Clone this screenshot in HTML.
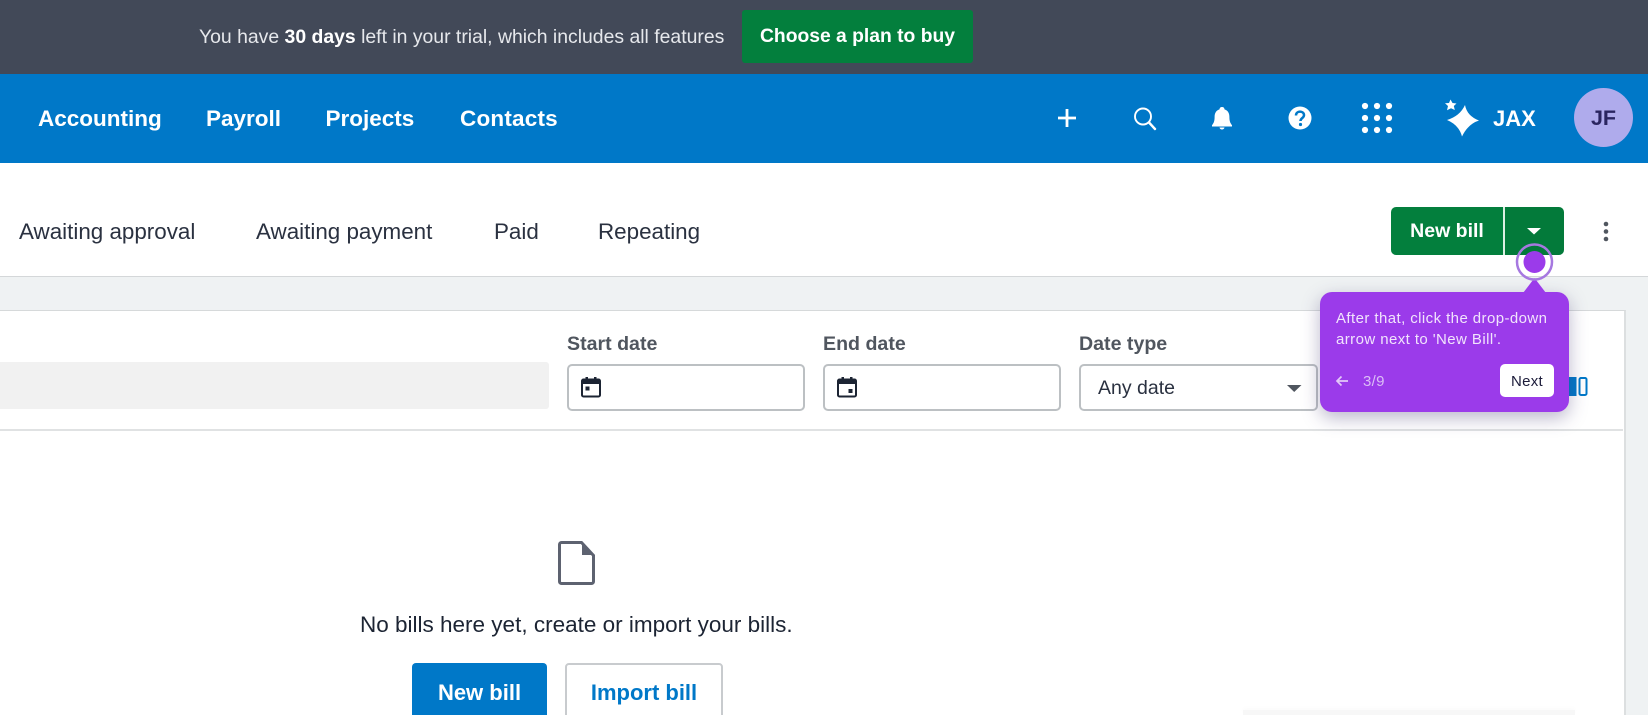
<!DOCTYPE html>
<html lang="en">
<head>
<meta charset="utf-8">
<title>Bills</title>
<style>
html,body{margin:0;padding:0;width:1648px;height:715px;overflow:hidden;background:#fff}
body{position:relative;font-family:"Liberation Sans",sans-serif;color:#1f2733}
.a{position:absolute;white-space:nowrap}
.nav{top:104px;font-size:22.5px;font-weight:700;color:#fff;line-height:30px}
.sub{top:217px;font-size:22.4px;color:#2a3140;line-height:30px}
.lbl{top:331px;font-size:19.6px;font-weight:700;color:#50565f;line-height:26px}
.inp{top:364px;height:47px;box-sizing:border-box;border:2px solid #bcc0c3;border-radius:5px;background:#fff}
</style>
</head>
<body>
<!-- trial bar -->
<div class="a" style="left:0;top:0;width:1648px;height:74px;background:#424958"></div>
<div class="a" style="left:199px;top:24px;font-size:19.4px;line-height:26px;color:#e6e8ec">You have <b style="color:#fff">30 days</b> left in your trial, which includes all features</div>
<div class="a" style="left:742px;top:10px;width:231px;height:53px;background:#037f3d;border-radius:3px"></div>
<div class="a" style="left:760px;top:24px;font-size:19.3px;line-height:26px;font-weight:700;color:#fff">Choose a plan to buy</div>

<!-- blue nav -->
<div class="a" style="left:0;top:74px;width:1648px;height:89px;background:#0078c8"></div>
<div class="a nav" style="left:38px">Accounting</div>
<div class="a nav" style="left:206px">Payroll</div>
<div class="a nav" style="left:325.500px">Projects</div>
<div class="a nav" style="left:460px;letter-spacing:.2px">Contacts</div>

<svg class="a" style="left:0;top:0" width="1648" height="170" viewBox="0 0 1648 170">
  <path d="M1067 109v18M1058 118h18" stroke="#fff" stroke-width="2.800" fill="none"/>
  <circle cx="1143" cy="116.500" r="8" stroke="#fff" stroke-width="1.900" fill="none"/>
  <path d="M1149 122.500l6 6.500" stroke="#fff" stroke-width="2.400" fill="none" stroke-linecap="round"/>
  <path d="M1222 107c1.600 0 2.400 1 2.500 2.400 3.500 1 4.900 4 4.900 7.600 0 4 .8 6 2.600 8.200v1.300h-20v-1.300c1.800-2.200 2.600-4.200 2.600-8.200 0-3.600 1.400-6.600 4.900-7.600.1-1.400.9-2.400 2.500-2.400zM1219.500 127.500h5c-.3 1.300-1.200 2-2.500 2s-2.200-.7-2.500-2z" fill="#fff"/>
  <circle cx="1300" cy="118" r="11.500" fill="#fff"/>
  <path d="M1296 115.500c0-2.500 1.800-3.900 4-3.900s4 1.400 4 3.500c0 3-3.500 3-3.500 5.900" stroke="#0078c8" stroke-width="2.500" fill="none"/>
  <circle cx="1300.500" cy="124.500" r="1.600" fill="#0078c8"/>
  <g fill="#fff">
    <circle cx="1365" cy="106" r="3.100"/><circle cx="1377" cy="106" r="3.100"/><circle cx="1389" cy="106" r="3.100"/>
    <circle cx="1365" cy="118" r="3.100"/><circle cx="1377" cy="118" r="3.100"/><circle cx="1389" cy="118" r="3.100"/>
    <circle cx="1365" cy="130" r="3.100"/><circle cx="1377" cy="130" r="3.100"/><circle cx="1389" cy="130" r="3.100"/>
    <path d="M1465 105Q1467 116 1479 120.500Q1468 124 1462 136.500Q1459 125 1447 120Q1460 116 1465 105z"/>
    <path d="M1450.500 99.500L1452.500 103 1456.500 103.500 1453.800 106 1454.800 110 1451 108.200 1447 110.200 1448 106 1445 103.300 1449 103z"/>
  </g>
</svg>
<div class="a" style="left:1493px;top:104px;font-size:22px;font-weight:700;line-height:30px;color:#fff">JAX</div>
<div class="a" style="left:1574px;top:88px;width:59px;height:59px;border-radius:50%;background:#afabec;text-align:center;line-height:61px;font-size:21.5px;font-weight:700;color:#2a2560">JF</div>

<!-- sub nav -->
<div class="a sub" style="left:19px">Awaiting approval</div>
<div class="a sub" style="left:256px">Awaiting payment</div>
<div class="a sub" style="left:494px">Paid</div>
<div class="a sub" style="left:598px">Repeating</div>

<div class="a" style="left:1391px;top:207px;width:112px;height:48px;background:#037f3d;border-radius:5px 0 0 5px;text-align:center;line-height:48px;font-size:19.5px;font-weight:700;color:#fff">New bill</div>
<div class="a" style="left:1503px;top:207px;width:1.500px;height:48px;background:#dcefe3"></div>
<div class="a" style="left:1504.500px;top:207px;width:59px;height:48px;background:#037a3a;border-radius:0 5px 5px 0"></div>
<svg class="a" style="left:1527px;top:228px" width="15" height="7"><path d="M0 0h14L7 6.500z" fill="#fff"/></svg>
<svg class="a" style="left:1600px;top:220px" width="12" height="24"><g fill="#50565f"><circle cx="6" cy="4" r="2.300"/><circle cx="6" cy="11.500" r="2.300"/><circle cx="6" cy="19" r="2.300"/></g></svg>

<!-- page background + card -->
<div class="a" style="left:0;top:276px;width:1648px;height:439px;background:#eff2f3"></div>
<div class="a" style="left:0;top:275.500px;width:1648px;height:1.500px;background:#d4d7d9"></div>
<div class="a" style="left:0;top:310px;width:1626px;height:405px;box-sizing:border-box;background:#fff;border-top:1.500px solid #d6d9da;border-right:2.500px solid #dcdfe0"></div>
<div class="a" style="left:0;top:429px;width:1623px;height:1.500px;background:#e0e2e3"></div>

<!-- filters -->
<div class="a" style="left:0;top:362px;width:549px;height:47px;background:#f1f1f1;border-radius:0 3px 3px 0"></div>
<div class="a lbl" style="left:567px">Start date</div>
<div class="a lbl" style="left:823px">End date</div>
<div class="a lbl" style="left:1079px">Date type</div>
<div class="a inp" style="left:567px;width:238px"></div>
<div class="a inp" style="left:823px;width:238px"></div>
<div class="a inp" style="left:1079px;width:239px"></div>
<svg class="a" style="left:580px;top:376px" width="22" height="22" viewBox="0 0 22 22">
  <path d="M3.500 3.500h15a1.500 1.500 0 0 1 1.500 1.500v14a1.500 1.500 0 0 1-1.500 1.500h-15a1.500 1.500 0 0 1-1.500-1.500v-14a1.500 1.500 0 0 1 1.500-1.500z" fill="none" stroke="#1c2433" stroke-width="2"/>
  <path d="M2 4h18v4H2z" fill="#1c2433"/><path d="M5.500 1h2.500v3H5.500zM14 1h2.500v3H14z" fill="#1c2433"/>
  <path d="M5.500 10.500h4v4h-4z" fill="#1c2433"/>
</svg>
<svg class="a" style="left:836px;top:376px" width="22" height="22" viewBox="0 0 22 22">
  <path d="M3.500 3.500h15a1.500 1.500 0 0 1 1.500 1.500v14a1.500 1.500 0 0 1-1.500 1.500h-15a1.500 1.500 0 0 1-1.500-1.500v-14a1.500 1.500 0 0 1 1.500-1.500z" fill="none" stroke="#1c2433" stroke-width="2"/>
  <path d="M2 4h18v4H2z" fill="#1c2433"/><path d="M5.500 1h2.500v3H5.500zM14 1h2.500v3H14z" fill="#1c2433"/>
  <path d="M12.500 13h4v4h-4z" fill="#1c2433"/>
</svg>
<div class="a" style="left:1098px;top:375px;font-size:19.5px;line-height:26px;color:#2a3140">Any date</div>
<svg class="a" style="left:1287px;top:385px" width="15" height="8"><path d="M0 0h14.500L7.200 7z" fill="#50565f"/></svg>
<svg class="a" style="left:1568px;top:376px" width="20" height="21" viewBox="0 0 20 21">
  <rect x="0" y="1" width="8.500" height="19" fill="#0078c8"/>
  <rect x="11.500" y="2" width="7" height="17" rx="1.500" fill="none" stroke="#0078c8" stroke-width="2"/>
</svg>

<!-- empty state -->
<svg class="a" style="left:558px;top:540px" width="38" height="46" viewBox="0 0 38 46">
  <path d="M3.500 2.500h20l12 13v26a2 2 0 0 1-2 2h-30a2 2 0 0 1-2-2v-37a2 2 0 0 1 2-2z" fill="#fff" stroke="#5d6270" stroke-width="3"/>
  <path d="M24 2l12 13H24z" fill="#5d6270"/>
</svg>
<div class="a" style="left:360px;top:611px;font-size:22.500px;line-height:28px;color:#1c2433">No bills here yet, create or import your bills.</div>
<div class="a" style="left:412px;top:663px;width:135px;height:60px;background:#0078c8;border-radius:4px;text-align:center;line-height:60px;font-size:22px;font-weight:700;color:#fff">New bill</div>
<div class="a" style="left:565px;top:663px;width:158px;height:60px;box-sizing:border-box;background:#fff;border:2px solid #c8cbce;border-radius:4px;text-align:center;line-height:56px;font-size:22px;font-weight:700;color:#0078c8">Import bill</div>
<div class="a" style="left:1243px;top:710px;width:332px;height:5px;background:#f7f7f7;box-shadow:0 -2px 4px #fbfbfb"></div>

<!-- tooltip -->
<div class="a" style="left:1320px;top:292px;width:249px;height:120px;background:#9b3bea;border-radius:12px;box-shadow:0 6px 18px rgba(60,50,110,.35)"></div>
<svg class="a" style="left:1510px;top:240px" width="50" height="54" viewBox="0 0 50 54">
  <path d="M13 53L24.500 38 36 53z" fill="#9b3bea"/>
  <circle cx="24.500" cy="22" r="17.500" fill="none" stroke="#a678e0" stroke-width="2.500"/>
  <circle cx="24.500" cy="22" r="11" fill="#9b3bea"/>
</svg>
<div class="a" style="left:1336px;top:308px;font-size:15px;line-height:21px;color:#f1e4fc;letter-spacing:.42px">After that, click the drop-down<br>arrow next to 'New Bill'.</div>
<svg class="a" style="left:1335px;top:374px" width="14" height="14" viewBox="0 0 14 14"><path d="M13 7H2M6.500 2.500L2 7l4.500 4.500" stroke="#e3c9f8" stroke-width="1.700" fill="none"/></svg>
<div class="a" style="left:1363px;top:372px;font-size:15px;line-height:20px;color:#dcbdf6;letter-spacing:.3px">3/9</div>
<div class="a" style="left:1500px;top:364px;width:54px;height:33px;background:#fff;border-radius:5px;text-align:center;line-height:35px;font-size:15px;color:#1c1c3a;letter-spacing:.3px">Next</div>
</body>
</html>
